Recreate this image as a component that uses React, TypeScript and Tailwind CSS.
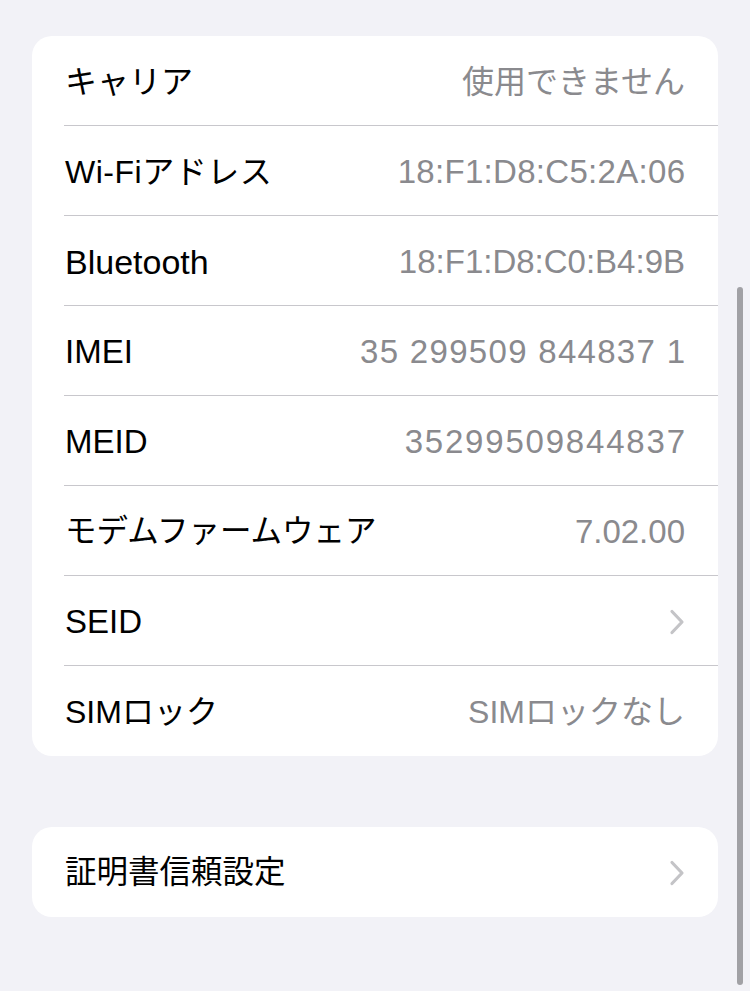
import React from "react";

const FONT = {
  fontFamily:
    '"Liberation Sans", "Noto Sans CJK JP", "Noto Sans", sans-serif',
};

function Chevron() {
  return (
    <svg width="16" height="26" viewBox="0 0 16 26" fill="none" className="shrink-0">
      <path
        d="M3 2.5 L13 13 L3 23.5"
        stroke="#c4c4c7"
        strokeWidth="3.2"
        strokeLinecap="round"
        strokeLinejoin="round"
      />
    </svg>
  );
}

type Row = {
  label: string;
  value?: string;
  chevron?: boolean;
  labelCls?: string;
  valueCls?: string;
};

const rows: Row[] = [
  { label: "キャリア", value: "使用できません", labelCls: "text-[32px]", valueCls: "text-[32px]" },
  { label: "Wi-Fiアドレス", value: "18:F1:D8:C5:2A:06", labelCls: "text-[32px] tracking-[0.5px]", valueCls: "text-[33px] tracking-[0.3px] mr-[-0.3px]" },
  { label: "Bluetooth", value: "18:F1:D8:C0:B4:9B", labelCls: "text-[34px]", valueCls: "text-[33px]" },
  { label: "IMEI", value: "35 299509 844837 1", labelCls: "text-[33px]", valueCls: "text-[33px] tracking-[1.3px] mr-[-1.3px]" },
  { label: "MEID", value: "35299509844837", labelCls: "text-[33px]", valueCls: "text-[33px] tracking-[1.8px] mr-[-1.8px]" },
  { label: "モデムファームウェア", value: "7.02.00", labelCls: "text-[31.5px]", valueCls: "text-[33px]" },
  { label: "SEID", chevron: true, labelCls: "text-[33px]" },
  { label: "SIMロック", value: "SIMロックなし", labelCls: "text-[32px]", valueCls: "text-[32px]" },
];

function ListRow({ row, last }: { row: Row; last: boolean }) {
  return (
    <div className="flex h-[90px] flex-col pl-[33px]">
      <div className="flex flex-1 items-center justify-between pr-[33px] pt-[2px]">
        <span className={`${row.labelCls ?? "text-[32px]"} leading-none text-black`}>
          {row.label}
        </span>
        {row.chevron ? (
          <Chevron />
        ) : (
          <span className={`${row.valueCls ?? "text-[32px]"} leading-none text-[#8a8a8e]`}>
            {row.value}
          </span>
        )}
      </div>
      {!last && <div className="ml-[-1px] h-px bg-[#c8c7cc]" />}
    </div>
  );
}

export default function App() {
  return (
    <div
      className="relative min-h-[991px] w-[750px] overflow-hidden bg-[#f2f2f7] px-[32px] pt-[36px]"
      style={FONT}
    >
      <div className="overflow-hidden rounded-[20px] bg-white">
        {rows.map((r, i) => (
          <ListRow key={r.label} row={r} last={i === rows.length - 1} />
        ))}
      </div>

      <div className="mt-[71px] flex h-[90px] items-center justify-between rounded-[20px] bg-white pl-[33px] pr-[33px] pt-[2px]">
        <span className="text-[31.5px] leading-none text-black">証明書信頼設定</span>
        <Chevron />
      </div>

      <div className="absolute left-[737px] top-[287px] h-[698px] w-[6px] rounded-full bg-[#a1a1a5]" />
    </div>
  );
}
